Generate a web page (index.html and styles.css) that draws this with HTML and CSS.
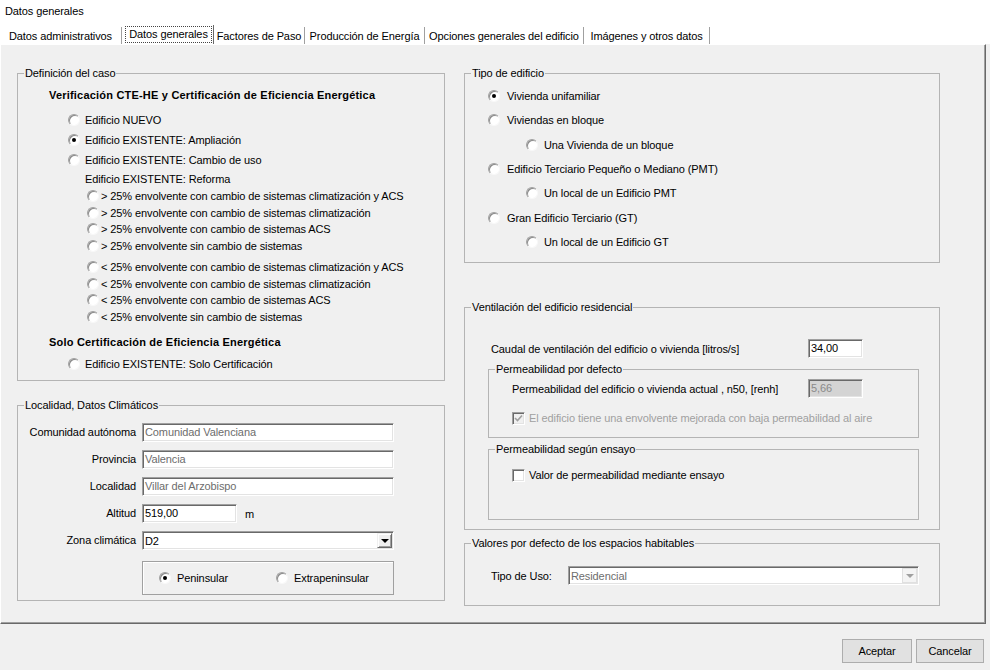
FILE: index.html
```html
<!DOCTYPE html>
<html lang="es">
<head>
<meta charset="utf-8">
<title>Datos generales</title>
<link rel="stylesheet" href="styles.css">
</head>
<body>
<div class="titlebar">Datos generales</div>
<div class="tabs">
  <div class="tab t1">Datos administrativos</div>
  <div class="tab t2 active"><span class="focus">Datos generales</span></div>
  <div class="tab t3">Factores de Paso</div>
  <div class="tab t4">Producción de Energía</div>
  <div class="tab t5">Opciones generales del edificio</div>
  <div class="tab t6">Imágenes y otros datos</div>
</div>
<div class="panel">
  <div class="col col-left">
    <fieldset class="group g-caso">
      <legend>Definición del caso</legend>
      <div class="heading h-first">Verificación CTE-HE y Certificación de Eficiencia Energética</div>
      <div class="row main first"><span class="radio"></span>Edificio NUEVO</div>
      <div class="row main"><span class="radio on"></span>Edificio EXISTENTE: Ampliación</div>
      <div class="row main"><span class="radio"></span>Edificio EXISTENTE: Cambio de uso</div>
      <div class="row reforma">Edificio EXISTENTE: Reforma</div>
      <div class="row sub"><span class="radio"></span>&gt; 25% envolvente con cambio de sistemas climatización y ACS</div>
      <div class="row sub"><span class="radio"></span>&gt; 25% envolvente con cambio de sistemas climatización</div>
      <div class="row sub"><span class="radio"></span>&gt; 25% envolvente con cambio de sistemas ACS</div>
      <div class="row sub"><span class="radio"></span>&gt; 25% envolvente sin cambio de sistemas</div>
      <div class="row sub sub-gap"><span class="radio"></span>&lt; 25% envolvente con cambio de sistemas climatización y ACS</div>
      <div class="row sub"><span class="radio"></span>&lt; 25% envolvente con cambio de sistemas climatización</div>
      <div class="row sub"><span class="radio"></span>&lt; 25% envolvente con cambio de sistemas ACS</div>
      <div class="row sub"><span class="radio"></span>&lt; 25% envolvente sin cambio de sistemas</div>
      <div class="heading h-second">Solo Certificación de Eficiencia Energética</div>
      <div class="row main solo"><span class="radio"></span>Edificio EXISTENTE: Solo Certificación</div>
    </fieldset>

    <fieldset class="group g-loc">
      <legend>Localidad, Datos Climáticos</legend>
      <div class="form">
        <label class="flabel">Comunidad autónoma</label>
        <div class="input wide disabled">Comunidad Valenciana</div>
        <label class="flabel">Provincia</label>
        <div class="input wide disabled">Valencia</div>
        <label class="flabel">Localidad</label>
        <div class="input wide disabled">Villar del Arzobispo</div>
        <label class="flabel">Altitud</label>
        <div class="alt"><div class="input short">519,00</div><span class="unit">m</span></div>
        <label class="flabel">Zona climática</label>
        <div class="input wide select"><span class="sel-text">D2</span><span class="arrow"><span class="tri"></span></span></div>
      </div>
      <div class="zone-box">
        <div class="row zopt pen"><span class="radio on"></span>Peninsular</div>
        <div class="row zopt ext"><span class="radio"></span>Extrapeninsular</div>
      </div>
    </fieldset>
  </div>

  <div class="col col-right">
    <fieldset class="group g-tipo">
      <legend>Tipo de edificio</legend>
      <div class="row tmain tfirst"><span class="radio on"></span>Vivienda unifamiliar</div>
      <div class="row tmain"><span class="radio"></span>Viviendas en bloque</div>
      <div class="row tsub"><span class="radio"></span>Una Vivienda de un bloque</div>
      <div class="row tmain"><span class="radio"></span>Edificio Terciario Pequeño o Mediano (PMT)</div>
      <div class="row tsub"><span class="radio"></span>Un local de un Edificio PMT</div>
      <div class="row tmain"><span class="radio"></span>Gran Edificio Terciario (GT)</div>
      <div class="row tsub"><span class="radio"></span>Un local de un Edificio GT</div>
    </fieldset>

    <fieldset class="group g-vent">
      <legend>Ventilación del edificio residencial</legend>
      <div class="row caudal"><span class="vlabel">Caudal de ventilación del edificio o vivienda [litros/s]</span><div class="input num">34,00</div></div>
      <fieldset class="group subgroup g-def">
        <legend>Permeabilidad por defecto</legend>
        <div class="row perm"><span class="plabel">Permeabilidad del edificio o vivienda actual , n50, [renh]</span><div class="input num off">5,66</div></div>
        <div class="row chk chk-def"><span class="check disabled"><svg width="9" height="9" viewBox="0 0 9 9"><path d="M1 4 L3.5 6.5 L8 1.5" fill="none" stroke="#a0a0a0" stroke-width="1.6"/></svg></span><span class="dis-text">El edificio tiene una envolvente mejorada con baja permeabilidad al aire</span></div>
      </fieldset>
      <fieldset class="group subgroup g-ens">
        <legend>Permeabilidad según ensayo</legend>
        <div class="row chk chk-ens"><span class="check"></span>Valor de permeabilidad mediante ensayo</div>
      </fieldset>
    </fieldset>

    <fieldset class="group g-val">
      <legend>Valores por defecto de los espacios habitables</legend>
      <div class="row uso"><span class="ulabel">Tipo de Uso:</span><div class="input select uso-sel disabled"><span class="sel-text">Residencial</span><span class="arrow arrow-off"><span class="tri"></span></span></div></div>
    </fieldset>
  </div>
</div>
<div class="footer">
  <button class="btn btn-ok">Aceptar</button>
  <button class="btn btn-cancel">Cancelar</button>
</div>
</body>
</html>
```

FILE: styles.css
```css
* { box-sizing: border-box; }
html, body { margin: 0; padding: 0; }
body {
  width: 990px;
  height: 670px;
  overflow: hidden;
  background: #f0f0f0;
  font-family: "Liberation Sans", Arial, sans-serif;
  font-size: 11px;
  letter-spacing: -0.1px;
  color: #000;
}

/* title + tabs */
.titlebar {
  height: 24px;
  line-height: 22px;
  padding-left: 5px;
  background: #fff;
}
.tabs {
  height: 20px;
  display: flex;
  align-items: flex-end;
  background: #fff;
}
.tab {
  height: 17px;
  line-height: 18px;
  text-align: center;
  white-space: nowrap;
  border-right: 1px solid #a0a0a0;
  box-shadow: 1px 0 0 #fff;
}
.t1 { width: 122px; }
.t2 { width: 92px; }
.t3 { width: 91px; }
.t4 { width: 120px; }
.t5 { width: 159px; }
.t6 { width: 126px; }
.tab.active {
  height: 19px;
  padding: 1px 1px 0 2px;
  border-left: 1px solid #fff;
  border-right: 1px solid #696969;
}
.focus {
  display: block;
  height: 17px;
  line-height: 15px;
  border: 1px dotted #444;
}

/* panel */
.panel {
  width: 986px;
  height: 580px;
  display: flex;
  gap: 19px;
  padding-left: 16px;
  border-top: 1px solid #fff;
  border-left: 1px solid #fff;
  border-right: 1px solid #696969;
  border-bottom: 1px solid #696969;
  box-shadow: inset -1px -1px 0 #a0a0a0;
}
.col { display: flex; flex-direction: column; }
.col-left { width: 428px; }
.col-right { width: 476px; }

.group {
  margin: 0;
  padding: 0;
  min-width: 0;
  border: 1px solid #b4b4b4;
}
.group legend {
  margin-left: 6px;
  padding: 0 1px;
  height: 14px;
  line-height: 14px;
}

.row {
  display: flex;
  align-items: center;
  white-space: nowrap;
}

/* radio / checkbox */
.radio {
  flex: none;
  width: 12px;
  height: 12px;
  border-radius: 50%;
  background: #fff;
  border: 1px solid;
  border-color: #a0a0a0 #f8f8f8 #f8f8f8 #a0a0a0;
  box-shadow: inset 1px 1px 0 #8a8a8a;
  display: flex;
  align-items: center;
  justify-content: center;
}
.radio.on::after {
  content: "";
  width: 4px;
  height: 4px;
  border-radius: 50%;
  background: #000;
}
.check {
  flex: none;
  width: 13px;
  height: 13px;
  background: #fff;
  border: 1px solid;
  border-color: #a0a0a0 #fff #fff #a0a0a0;
  box-shadow: inset 1px 1px 0 #696969, inset -1px -1px 0 #e3e3e3;
  display: flex;
  align-items: center;
  justify-content: center;
}
.check.disabled { background: #f0f0f0; }
.dis-text { color: #a0a0a0; }

/* left: definición del caso */
.g-caso { margin-top: 21px; height: 315px; }
.heading {
  font-weight: bold;
  letter-spacing: 0.2px;
  height: 16px;
  line-height: 16px;
  padding-left: 31px;
  white-space: nowrap;
}
.h-first { margin-top: 7px; }
.h-second { margin-top: 9px; }
.main { height: 20px; padding-left: 50px; }
.main .radio { margin-right: 5px; }
.main.first { margin-top: 7px; }
.main.solo { margin-top: 4px; }
.reforma { height: 18px; padding-left: 67px; }
.sub { height: 16.5px; padding-left: 69px; }
.sub .radio { margin-right: 2px; }
.sub-gap { margin-top: 5px; }

/* left: localidad */
.g-loc { margin-top: 17px; height: 203px; }
.form {
  margin-top: 11px;
  display: grid;
  grid-template-columns: 118px 252px;
  column-gap: 6px;
  row-gap: 8px;
}
.flabel {
  text-align: right;
  height: 19px;
  line-height: 19px;
}
.input {
  height: 19px;
  line-height: 16px;
  padding: 0 2px;
  background: #fff;
  border: 1px solid;
  border-color: #a0a0a0 #fff #fff #a0a0a0;
  box-shadow: inset 1px 1px 0 #696969, inset -1px -1px 0 #e3e3e3;
  white-space: nowrap;
  overflow: hidden;
}
.input.disabled { color: #6d6d6d; }
.alt { display: flex; align-items: center; }
.input.short { width: 95px; }
.unit { margin-left: 8px; }
.select {
  display: flex;
  align-items: center;
  padding-right: 1px;
}
.sel-text { flex: 1; }
.arrow {
  flex: none;
  width: 15px;
  height: 15px;
  background: #f0f0f0;
  border: 1px solid;
  border-color: #f0f0f0 #696969 #696969 #f0f0f0;
  box-shadow: inset 1px 1px 0 #fff, inset -1px -1px 0 #a0a0a0;
  display: flex;
  align-items: center;
  justify-content: center;
}
.tri {
  width: 0;
  height: 0;
  border-left: 4px solid transparent;
  border-right: 4px solid transparent;
  border-top: 4px solid #000;
  margin-top: 1px;
}
.arrow-off { background: #f4f4f4; border-color: #e0e0e0; box-shadow: none; }
.arrow-off .tri { border-top-color: #a0a0a0; }

.zone-box {
  margin-top: 11px;
  margin-left: 124px;
  width: 252px;
  height: 34px;
  border: 1px solid #a0a0a0;
  box-shadow: inset 1px 1px 0 #fff;
  display: flex;
  align-items: center;
}
.zopt .radio { margin-right: 6px; }
.pen { margin-left: 16px; width: 117px; }

/* right: tipo de edificio */
.g-tipo { margin-top: 21px; height: 197px; }
.tmain, .tsub { height: 24.3px; }
.tmain { padding-left: 23px; }
.tmain .radio { margin-right: 7px; }
.tsub { padding-left: 61px; }
.tsub .radio { margin-right: 6px; }
.tfirst { margin-top: 4px; }

/* right: ventilación */
.g-vent { margin-top: 37px; height: 230px; }
.caudal { margin-top: 25px; padding-left: 26px; height: 19px; }
.vlabel { width: 317px; }
.input.num { width: 55px; }
.input.off { background: #d4d4d4; color: #8a8a8a; }
.subgroup { margin: 4px 20px 0 23px; }
.g-def { height: 76px; }
.g-ens { height: 78px; }
.perm { margin-top: 3px; padding-left: 23px; height: 19px; }
.plabel { width: 296px; }
.chk { padding-left: 23px; height: 16px; }
.chk .check { margin-right: 4px; }
.chk-def { margin-top: 12px; }
.chk-ens { margin-top: 11px; }

/* right: valores */
.g-val { margin-top: 6px; height: 70px; }
.uso { margin-top: 16px; padding-left: 26px; height: 19px; }
.ulabel { width: 77px; }
.uso-sel { width: 351px; }

/* footer */
.footer {
  height: 46px;
  display: flex;
  justify-content: flex-end;
  align-items: flex-start;
  padding-top: 15px;
  padding-right: 6px;
  gap: 4px;
}
.btn {
  height: 24px;
  margin: 0;
  padding: 0;
  font-family: inherit;
  font-size: 11px;
  letter-spacing: -0.1px;
  color: #000;
  background: #e1e1e1;
  border: 1px solid #adadad;
}
.btn-ok { width: 70px; }
.btn-cancel { width: 68px; }
```
